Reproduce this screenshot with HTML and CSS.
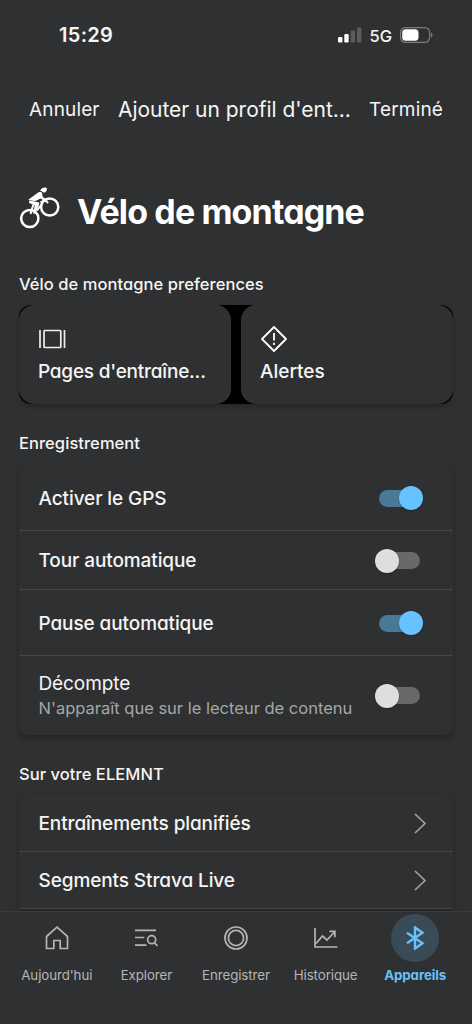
FILE: index.html
```html
<!DOCTYPE html>
<html lang="fr">
<head>
<meta charset="utf-8">
<title>Vélo de montagne</title>
<link rel="stylesheet" href="styles.css">
</head>
<body>
<div class="screen">
  <header class="status">
    <span class="clock">15:29</span>
    <div class="indicators">
      <svg class="signal" width="24" height="16" viewBox="0 0 24 16"><rect x="0" y="10" width="4.4" height="5.5" rx="1.2" fill="#fff"/><rect x="6.3" y="7" width="4.4" height="8.5" rx="1.2" fill="#fff"/><rect x="12.7" y="3.5" width="4.4" height="12" rx="1.2" fill="#5b5c5d"/><rect x="19" y="0.5" width="4.4" height="15" rx="1.2" fill="#5b5c5d"/></svg>
      <span class="network">5G</span>
      <svg class="battery" width="34" height="16" viewBox="0 0 34 16"><rect x="0.6" y="0.6" width="29" height="14.8" rx="4.8" fill="none" stroke="#7b7c7d" stroke-width="1.2"/><rect x="2.2" y="2.2" width="16.3" height="11.6" rx="3.5" fill="#fff"/><path d="M31 5.500c2 .6 2 4.400 0 5z" fill="#7b7c7d"/></svg>
    </div>
  </header>
  <nav class="navbar">
    <span class="action cancel">Annuler</span>
    <span class="heading">Ajouter un profil d'ent...</span>
    <span class="action done">Terminé</span>
  </nav>
  <div class="title-row">
    <svg class="bike" width="40" height="42" viewBox="0 0 40 42" fill="none" stroke="#fff">
      <circle cx="9.800" cy="31.500" r="8.600" stroke-width="2.500"/><circle cx="29.700" cy="20" r="8.600" stroke-width="2.500"/>
      <path d="M8.200 12.800L18.500 5.300c1.400-.7 3.300-.4 3.600 1l.7 3.700 3.700 2.600c1.200 1-.2 2.500-1.300 1.800L20.500 11.500l-5.500 2.800z" fill="#fff" stroke="none"/>
      <path d="M9 13.500l9.500 1.700c1 .3 1 1.300.6 2.200l-3.600 9-2.400 .3 1.600-8.300-5.500-2.500z" fill="#fff" stroke="none"/>
      <path d="M10.500 27l2.700-9M17 23.500l4.500-6M20.500 15.500l5-2.500 2.500 3" stroke-width="2"/>
      <path d="M20 3.800c1.500-2.800 4-3.800 6.300-3 .9.800.8 2.200.2 2.700l-.8 1.700-2.500.3-1.500-1.300z" fill="#fff" stroke="none"/>
    </svg>
    <h1>Vélo de montagne</h1>
  </div>
  <h2 class="label pref alt">Vélo de montagne preferences</h2>
  <div class="cards">
    <div class="card">
      <svg class="pages-icon" width="27" height="20" viewBox="0 0 27 20" fill="none" stroke="#eee" stroke-width="1.700"><path d="M1 1v18M25.500 1v18"/><rect x="5" y="1.500" width="16.800" height="17" rx=".8"/></svg>
      <span class="alt pages">Pages d'entraîne...</span>
    </div>
    <div class="card">
      <svg class="warn" width="28" height="28" viewBox="0 0 28 28" fill="none" stroke="#fff" stroke-width="1.800" stroke-linejoin="round"><path d="M14 2L26 14 14 26 2 14zM14 8v7.500M14 17.700v2.200"/></svg>
      <span class="alerts">Alertes</span>
    </div>
  </div>
  <h2 class="label rec">Enregistrement</h2>
  <div class="list">
    <div class="row gps"><span class="t-gps">Activer le GPS</span><i class="switch on"></i></div>
    <div class="row lap"><span class="t-lap">Tour automatique</span><i class="switch"></i></div>
    <div class="row pause"><span class="alt t-pause">Pause automatique</span><i class="switch on"></i></div>
    <div class="row countdown"><div class="stack"><span class="t-count">Décompte</span><small>N'apparaît que sur le lecteur de contenu</small></div><i class="switch"></i></div>
  </div>
  <h2 class="label elemnt">Sur votre ELEMNT</h2>
  <div class="list links">
    <div class="row link"><span class="alt t-plan">Entraînements planifiés</span><svg width="13" height="22" viewBox="0 0 13 22" fill="none" stroke="#a0a1a2" stroke-width="1.700"><path d="M1 1L11 10.500 1 20"/></svg></div>
    <div class="row link"><span class="alt t-seg">Segments Strava Live</span><svg width="13" height="22" viewBox="0 0 13 22" fill="none" stroke="#a0a1a2" stroke-width="1.700"><path d="M1 1L11 10.500 1 20"/></svg></div>
  </div>
  <nav class="tabs">
    <div class="tab"><div class="icon"><svg width="24" height="24" viewBox="0 0 24 24"><path d="M1.500 10.500L12 1.200l10.500 9.300v12h-7.300v-8H8.800v8H1.500z"/></svg></div><span class="n-home">Aujourd'hui</span></div>
    <div class="tab"><div class="icon"><svg width="24" height="24" viewBox="0 0 24 24"><path d="M1 4.300h21M1 11.500h9.300M1 19.200h11.500M20.500 17l3 3"/><circle cx="17.700" cy="13.700" r="4"/></svg></div><span class="n-explore">Explorer</span></div>
    <div class="tab"><div class="icon"><svg width="24" height="24" viewBox="0 0 24 24"><circle cx="12" cy="12" r="11"/><circle cx="12" cy="12" r="7.600"/></svg></div><span class="n-record">Enregistrer</span></div>
    <div class="tab"><div class="icon"><svg width="24" height="24" viewBox="0 0 24 24"><path d="M1 2v19h22.500M2 17.500L8.500 10l4.500 4 8-8.500M15.500 5.300h5.400v6"/></svg></div><span class="n-history">Historique</span></div>
    <div class="tab active"><div class="icon"><svg width="24" height="24" viewBox="0 0 24 24"><path d="M4 6.800L19.500 17.300 12 22.500V1.500l7.500 5.200L4 17.200"/></svg></div><span class="n-devices">Appareils</span></div>
  </nav>
</div>
</body>
</html>
```
FILE: styles.css
```css
* { box-sizing: border-box; }
body { margin: 0; background: #2f3032; }
.screen {
  width: 472px; height: 1024px; overflow: hidden;
  display: flex; flex-direction: column;
  background: #2f3032; color: #f5f5f5;
  font-family: Inter, "Liberation Sans", sans-serif;
  white-space: nowrap;
}
.alt, h1, .n-devices { font-feature-settings: "cv11"; }
.status { flex: none; height: 70px; padding: 0 38px 0 59px; display: flex; align-items: center; justify-content: space-between; }
.clock { font-size: 20px; font-weight: 600; letter-spacing: .3px; }
.indicators { display: flex; align-items: center; }
.network { font-size: 16.5px; font-weight: 500; margin: 1px 8px 0 7px; }
.navbar { flex: none; height: 78px; padding: 0 29px; display: flex; align-items: center; justify-content: space-between; }
.action { font-size: 19px; letter-spacing: .15px; }
.heading { font-size: 21px; letter-spacing: -.02px; }
.title-row { flex: none; height: 124px; padding: 0 20px; display: flex; align-items: center; gap: 17px; }
.bike { margin-bottom: 4px; }
h1 { margin: 2px 0 0; font-size: 34px; font-weight: 700; letter-spacing: -.87px; color: #fff; }
.label { flex: none; margin: 0; padding-left: 19px; font-size: 16.5px; font-weight: 500; line-height: 24px; letter-spacing: .06px; }
.cards { flex: none; margin: 9px 19px 27px; height: 99px; background: #000; border-radius: 12px; display: flex; gap: 10px; box-shadow: 0 3px 5px rgba(0,0,0,.18); }
.card { flex: 1; border-radius: 15px; background: #2f3032; padding: 24px 19px 0; display: flex; flex-direction: column; gap: 11px; font-size: 19px; font-weight: 500; line-height: 24px; }
.card .warn { margin: -4px 0; }
.pages-icon { margin-left: 1px; }
.pages { letter-spacing: -.22px; }
.list { flex: none; margin: 10px 19px 27px; border-radius: 8px; box-shadow: 0 3px 4px rgba(0,0,0,.18), 0 0 7px rgba(0,0,0,.08); }
.row { display: flex; align-items: center; justify-content: space-between; padding: 0 29.5px 0 19.5px; font-size: 19px; font-weight: 500; letter-spacing: -.1px; border-bottom: 1px solid #464749; }
.row:last-child { border-bottom: 0; }
.gps { height: 66px; padding-top: 1px; }
.lap { height: 59px; padding-top: 1px; }
.pause { height: 66px; padding-top: 1px; }
.countdown { height: 79px; }
.stack { display: flex; flex-direction: column; line-height: 24px; padding-top: 1px; }
.t-count { font-weight: 400; }
small { font-size: 16.5px; font-weight: 400; letter-spacing: 0; color: #a5a6a7; }
.switch { flex: none; position: relative; width: 41px; height: 17px; margin-right: 4px; border-radius: 9px; background: #68696a; }
.switch::before { content: ""; position: absolute; left: -4px; top: -3.5px; width: 24px; height: 24px; border-radius: 50%; background: #dededf; box-shadow: 0 1px 2px rgba(0,0,0,.25); }
.switch.on { background: #487997; }
.switch.on::before { left: 20px; background: #66c3ff; }
.links { margin-top: 9px; margin-bottom: 2px; border-radius: 8px 8px 0 0; }
.link, .link:last-child { height: 57px; padding-right: 26px; padding-top: 1px; border-bottom: 1px solid #464749; }
.tabs { flex: none; height: 113px; border-top: 1px solid #38393b; padding: 2px 12px 0; display: grid; grid-template-columns: repeat(5, 1fr); background: #2f3032; }
.tab { display: flex; flex-direction: column; align-items: center; gap: 4px; color: #b4b5b6; font-size: 13.3px; line-height: 18px; letter-spacing: -.08px; }
.icon { width: 48px; height: 48px; border-radius: 50%; display: grid; place-items: center; }
.icon svg { fill: none; stroke: currentColor; stroke-width: 1.7; }
.tab.active { color: #68c1fb; font-weight: 700; }
.active .icon { background: #3a4b58; }
.active .icon svg { stroke-width: 2.4; }
```
